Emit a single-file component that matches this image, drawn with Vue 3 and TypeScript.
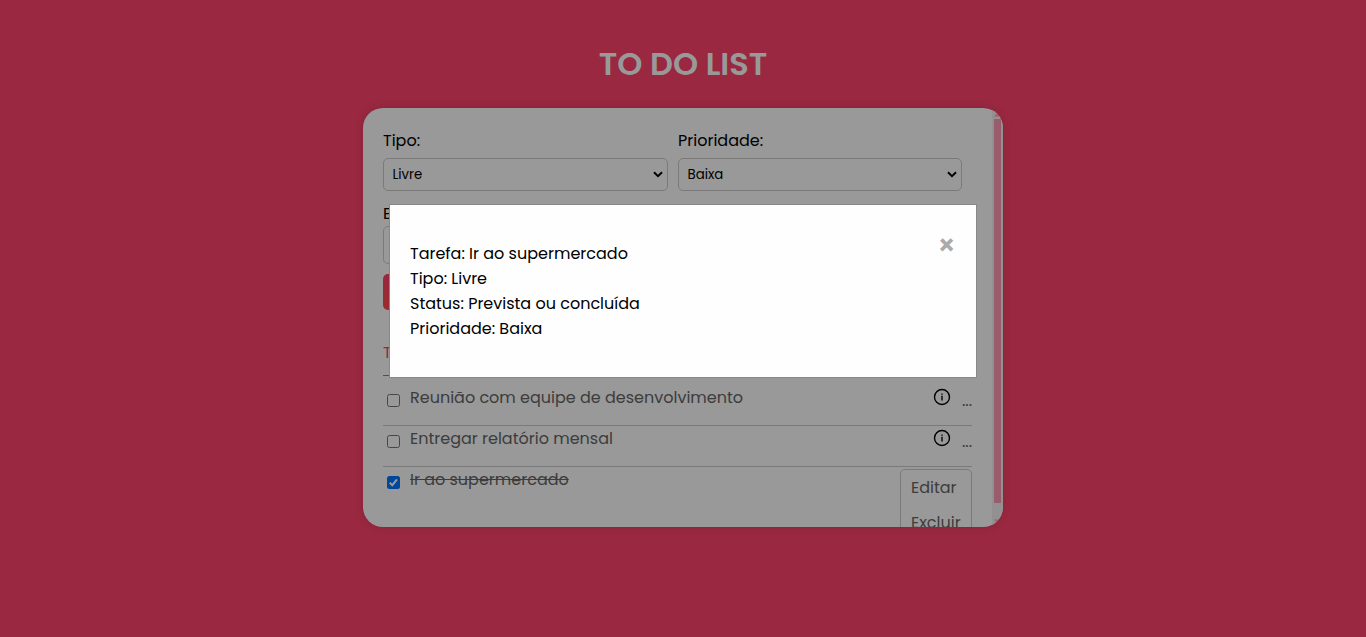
<script setup lang="ts">
import { ref } from 'vue'

interface Task {
  title: string
  done: boolean
}

const tasks = ref<Task[]>([
  { title: 'Reunião com equipe de desenvolvimento', done: false },
  { title: 'Entregar relatório mensal', done: false },
  { title: 'Ir ao supermercado', done: true },
])
const modalOpen = ref(true)
</script>

<template>
  <main class="page">
    <h1>TO DO LIST</h1>
    <section class="card">
      <div class="content">
        <div class="fields">
          <div class="field">
            <label>Tipo:</label>
            <div class="select"><span>Livre</span>
              <svg width="10" height="7" viewBox="0 0 10 7"><path d="M1 1.2 5 5.2 9 1.2" fill="none" stroke="#000" stroke-width="2" /></svg>
            </div>
          </div>
          <div class="field">
            <label>Prioridade:</label>
            <div class="select"><span>Baixa</span>
              <svg width="10" height="7" viewBox="0 0 10 7"><path d="M1 1.2 5 5.2 9 1.2" fill="none" stroke="#000" stroke-width="2" /></svg>
            </div>
          </div>
        </div>
        <div class="entry-label">E</div>
        <div class="entry"></div>
        <div class="add"></div>
        <div class="list-title">T</div>
        <ul>
          <li v-for="t in tasks" :key="t.title">
            <span class="check" :class="{ on: t.done }">
              <svg v-if="t.done" width="13" height="13" viewBox="0 0 13 13"><path d="M2.8 6.7 5.3 9.2 10 3.3" fill="none" stroke="#fff" stroke-width="2" /></svg>
            </span>
            <span class="task"><span :class="{ done: t.done }">{{ t.title }}</span></span>
            <template v-if="!t.done">
              <svg class="info" width="18" height="18" viewBox="0 0 18 18"><circle cx="9" cy="9" r="7.5" fill="none" stroke="#000" stroke-width="1.4" /><path d="M9 5.5v1.3M9 7.8v4.6" stroke="#333" stroke-width="1.7" /></svg>
              <span class="dots">...</span>
            </template>
            <div v-else class="menu"><span>Editar</span><span>Excluir</span></div>
          </li>
        </ul>
      </div>
      <div class="track">
        <svg width="7" height="4" viewBox="0 0 7 4"><path d="M0 3.5 3.5 0 7 3.5z" fill="#ff9ab5" /></svg>
        <div class="thumb"></div>
        <svg width="7" height="4" viewBox="0 0 7 4"><path d="M0 .5 3.5 4 7 .5z" fill="#ff9ab5" /></svg>
      </div>
    </section>
    <div v-if="modalOpen" class="overlay">
      <div class="modal">
        <p>
          Tarefa: Ir ao supermercado<br />
          Tipo: Livre<br />
          Status: Prevista ou concluída<br />
          Prioridade: Baixa
        </p>
        <span class="close" @click="modalOpen = false">&times;</span>
      </div>
    </div>
  </main>
</template>

<style>
body {
  margin: 0;
  background: #ff436b;
}
</style>

<style scoped>
* {
  box-sizing: border-box;
}
.page {
  height: 637px;
  overflow: hidden;
  background: #ff436b;
  font: 400 16px/25px Poppins, Inter, sans-serif;
  color: #000;
  white-space: nowrap;
}
h1 {
  margin: 0;
  padding-top: 39px;
  height: 108px;
  text-align: center;
  font-size: 32px;
  line-height: 50px;
  font-weight: 600;
  color: #fff;
}
.card {
  width: 640px;
  height: 419px;
  margin: 0 auto;
  display: flex;
  overflow: hidden;
  background: #fff;
  border-radius: 20px;
  box-shadow: 0 0 10px rgba(0, 0, 0, 0.12);
}
.content {
  width: 629px;
  padding: 20px 20px 0;
}
.fields {
  display: grid;
  grid-template-columns: 285px 284px;
  column-gap: 10px;
}
.field label {
  display: block;
  height: 30px;
}
.select {
  height: 33px;
  display: flex;
  align-items: center;
  justify-content: space-between;
  padding: 0 4px 0 8.5px;
  border: 1px solid #ccc;
  border-radius: 5px;
  font-size: 13.33px;
}
.entry-label {
  margin-top: 10px;
  height: 25px;
}
.entry {
  height: 38px;
  width: 579px;
  border: 1px solid #ccc;
  border-radius: 5px;
}
.add {
  margin-top: 10px;
  width: 579px;
  height: 36px;
  border-radius: 5px;
  background: linear-gradient(#ff416c, #ff4b4b);
}
.list-title {
  height: 65px;
  padding-top: 30px;
  color: #ff416c;
}
ul {
  list-style: none;
  margin: 0;
  padding: 1px 0 0;
  border-top: 1px solid #888;
}
li {
  height: 41px;
  display: flex;
  align-items: flex-start;
  padding-top: 8px;
  color: #666;
}
li + li {
  border-top: 1px solid #ccc;
  padding-top: 0;
}
li:first-child {
  height: 48px;
}
.check {
  width: 13px;
  height: 13px;
  margin: 9px 10px 0 4px;
  border: 1px solid #767676;
  border-radius: 2.5px;
}
.check.on {
  border: 0;
  background: #0075ff;
}
.check svg {
  display: block;
}
.task {
  flex: 1;
}
.done {
  text-decoration: line-through;
}
.info {
  margin: 3px 11px 0 0;
}
.dots {
  width: 10px;
  margin-top: 3px;
  display: flex;
  justify-content: flex-end;
}
.menu {
  width: 72px;
  height: 76px;
  margin-top: 2px;
  padding: 5px 10px;
  border: 1px solid #ccc;
  border-radius: 5px;
  display: flex;
  flex-direction: column;
  gap: 10px;
}
.track {
  width: 11px;
  display: flex;
  flex-direction: column;
  align-items: center;
  background: #f5f0f2;
  padding-top: 5px;
}
.thumb {
  width: 7px;
  height: 384px;
  margin: 2px 0 16px;
  background: #ff9ab5;
}
.overlay {
  position: fixed;
  inset: 0;
  padding-top: 204px;
  background: rgba(0, 0, 0, 0.4);
}
.modal {
  width: 588px;
  height: 174px;
  margin: 0 auto;
  padding: 20px;
  display: flex;
  justify-content: space-between;
  align-items: flex-start;
  background: #fefefe;
  border: 1px solid #888;
}
.modal p {
  margin: 16px 0;
}
.close {
  color: #aaa;
  font-size: 28px;
  font-weight: 600;
  line-height: 42px;
}
</style>
